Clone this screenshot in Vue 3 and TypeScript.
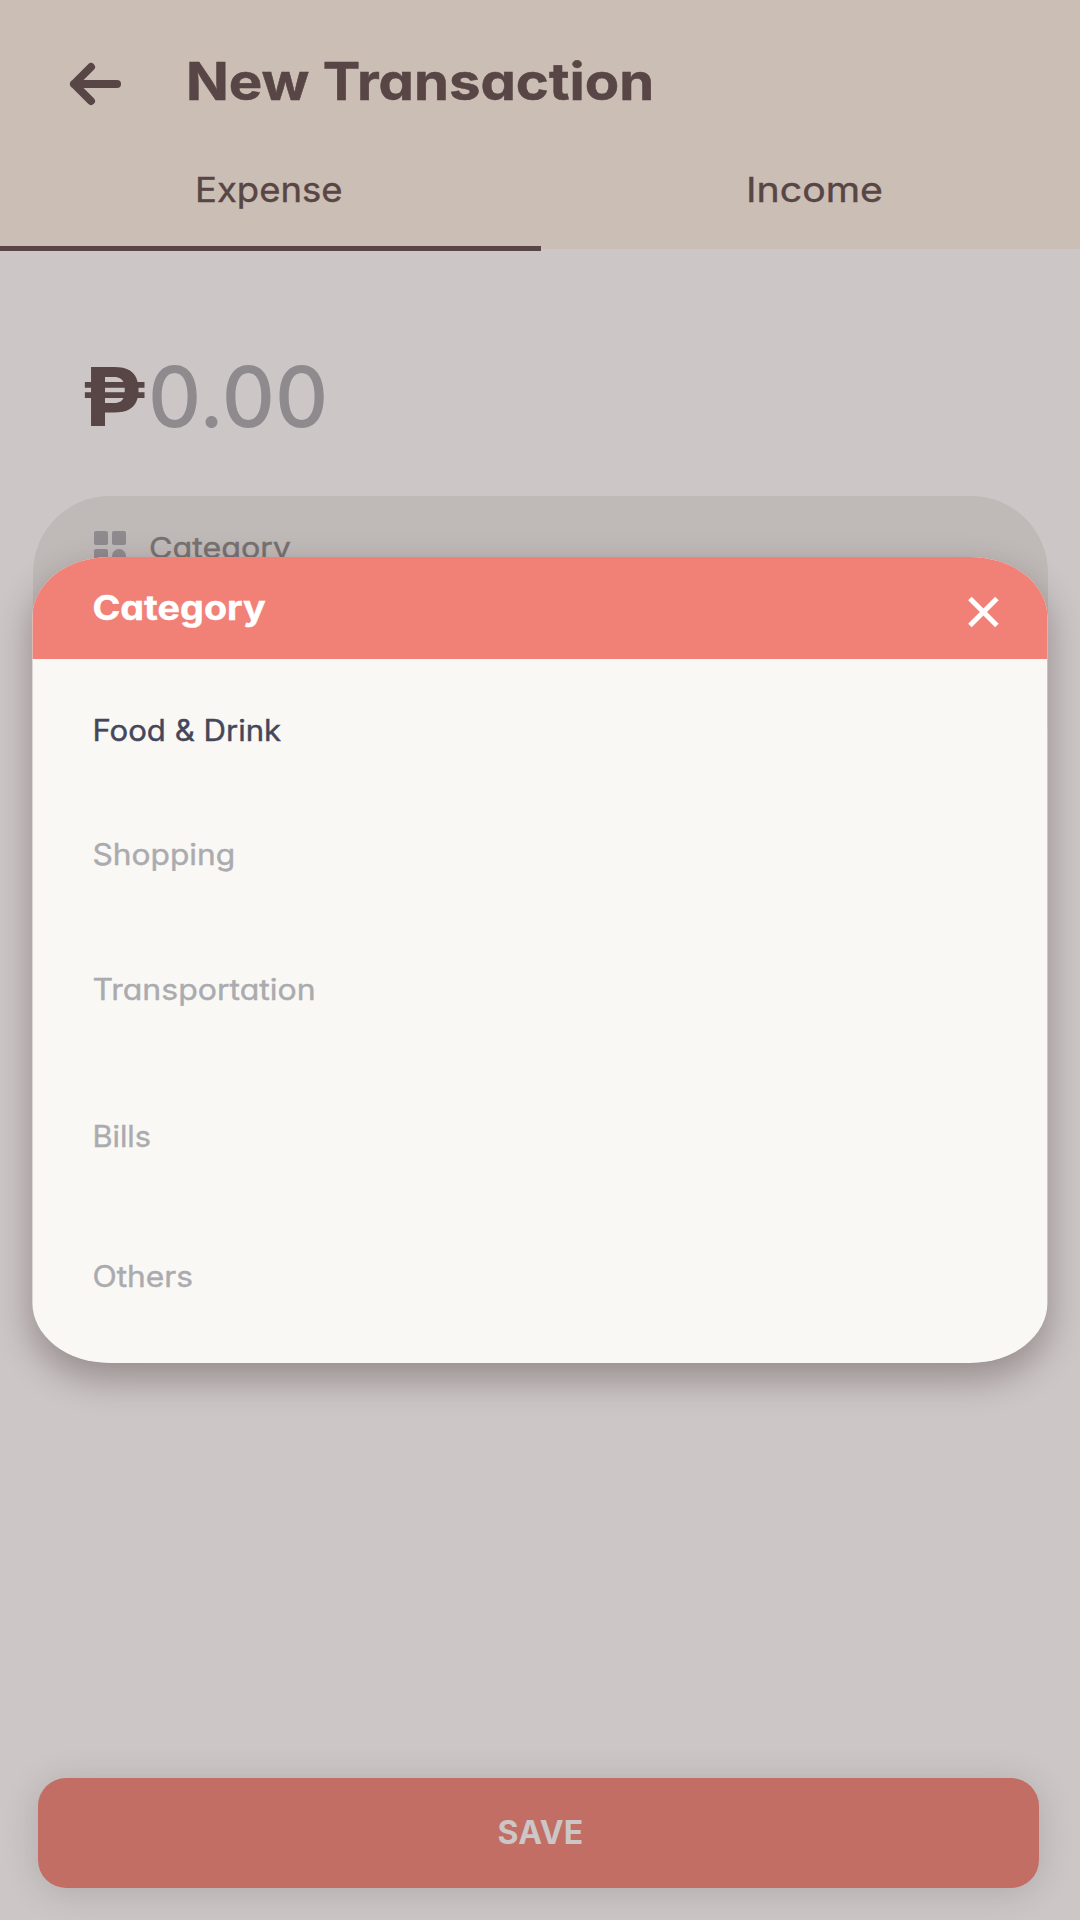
<script setup lang="ts">
interface Option {
  label: string
  cls: string
  active?: boolean
}

const options: Option[] = [
  { label: 'Food & Drink', cls: 'food', active: true },
  { label: 'Shopping', cls: 'shopping' },
  { label: 'Transportation', cls: 'transport' },
  { label: 'Bills', cls: 'bills' },
  { label: 'Others', cls: 'others' },
]
</script>

<template>
  <div class="screen">
    <header class="top">
      <div class="bar">
        <svg class="back" width="54" height="44" viewBox="0 0 54 44"><path d="M48 22H5M22 5L5 22L22 39" /></svg>
        <h1>New Transaction</h1>
      </div>
      <nav class="tabs">
        <div class="tab on"><span class="expense">Expense</span></div>
        <div class="tab"><span class="income">Income</span></div>
      </nav>
    </header>

    <div class="amount"><span class="peso">₱</span><span class="num">0.00</span></div>

    <section class="card">
      <svg width="34" height="34" viewBox="0 0 34 34">
        <rect x="1" y="1" width="14" height="14" rx="2" />
        <rect x="19" y="1" width="14" height="14" rx="2" />
        <rect x="1" y="19" width="14" height="14" rx="2" />
        <circle cx="26" cy="26" r="7" />
      </svg>
      <span class="field">Category</span>
    </section>

    <section class="modal">
      <div class="head">
        <h2>Category</h2>
        <svg width="32" height="32" viewBox="0 0 32 32"><path d="M2.5 2.5L29.5 29.5M29.5 2.5L2.5 29.5" /></svg>
      </div>
      <ul>
        <li v-for="o in options" :key="o.label" :class="[o.cls, { active: o.active }]">{{ o.label }}</li>
      </ul>
    </section>

    <button class="save">SAVE</button>
  </div>
</template>

<style>
body { margin: 0; }
</style>

<style scoped>
.screen {
  position: relative;
  width: 1080px;
  height: 1920px;
  overflow: hidden;
  display: flex;
  flex-direction: column;
  background: #ccc6c6;
  color: #584545;
  font-family: Inter, "Open Sans", sans-serif;
  font-weight: 400;
  font-feature-settings: "cv11";
  white-space: nowrap;
}
h1, h2, ul { margin: 0; padding: 0; }
h1, h2, li, .expense, .income, .field, .peso, .num { transform-origin: left; }
li, .expense, .income, .field { -webkit-text-stroke: 0.4px currentColor; }

.top { height: 249px; background: #cbbeb5; display: flex; flex-direction: column; flex: none; }
.bar { height: 142px; flex: none; display: flex; padding-top: 21.5px; box-sizing: border-box; }
.back { margin: 40.5px 0 0 69px; flex: none; }
.back path { fill: none; stroke: #584545; stroke-width: 8; stroke-linecap: round; stroke-linejoin: round; }
h1 { margin-left: 62.5px; font-size: 52px; line-height: 120px; font-weight: 700; transform: scaleX(1.081); -webkit-text-stroke: 0.5px currentColor; }

.tabs { height: 107px; flex: none; display: flex; align-items: flex-start; }
.tab { flex: 1; box-sizing: border-box; height: 107px; font-size: 34.5px; line-height: 96px; }
.tab.on { position: relative; flex: 0 0 541px; height: 109px; border-bottom: 5px solid #584545; }
.expense, .income { display: inline-block; }
.expense { margin-left: 195px; transform: scaleX(1.057); }
.income { margin-left: 204.5px; transform: scaleX(1.138); }

.amount { display: flex; flex: none; margin-top: 88px; padding-left: 81px; height: 120px; line-height: 120px; }
.peso { width: 67px; font-size: 81px; font-weight: 700; transform: scaleX(1.14); }
.num { font-size: 84px; font-weight: 500; color: #8f8a8e; transform: scaleX(0.982); }

.card {
  margin: 38.5px 32px 0 33px;
  height: 300px;
  border-radius: 77px;
  background: #bfb9b8;
  display: flex;
  flex: none;
  padding: 34px 0 0 60px;
  box-sizing: border-box;
  color: #777170;
  font-size: 29px;
  line-height: 35px;
}
.card svg { fill: #8f8a8e; margin-right: 21.5px; }
.field { height: 35px; transform: scaleX(1.11); }

.modal {
  position: absolute;
  left: 32px;
  top: 557px;
  width: 1015px;
  height: 806px;
  border-radius: 77px / 60px;
  overflow: hidden;
  background: #f9f8f4;
  box-shadow: 0 15px 36px rgba(30, 5, 5, 0.31);
  transform: translateX(0.4px);
}
.head { height: 102px; background: #f18177; display: flex; justify-content: space-between; padding: 0 48.5px 0 60px; color: #fff; box-sizing: border-box; }
.head svg { margin-top: 38.5px; }
.head path { stroke: #fff; stroke-width: 5; }
h2 { font-size: 34px; line-height: 102px; font-weight: 700; transform: scaleX(1.11); -webkit-text-stroke: 0.4px currentColor; }
ul { list-style: none; display: flex; flex-direction: column; align-items: flex-start; padding: 51px 0 0 60px; }
li { font-size: 29.5px; line-height: 40px; color: #ababaf; height: 40px; }
li.active { color: #44475a; }
.food { margin-bottom: 84px; transform: scaleX(1.055); }
.shopping { margin-bottom: 95px; transform: scaleX(1.075); }
.transport { margin-bottom: 107px; transform: scaleX(1.085); }
.bills { margin-bottom: 100px; transform: scaleX(1.04); }
.others { transform: scaleX(1.075); }

.save {
  position: absolute;
  left: 38px;
  top: 1778px;
  width: 1001px;
  height: 110px;
  border: 0;
  border-radius: 28px;
  background: #c26e65;
  color: #ccc6c6;
  font: 700 32px/110px Inter, sans-serif;
  letter-spacing: 0.2px;
  padding: 0 0 0 4px;
  box-shadow: 0 4px 36px rgba(0, 0, 0, 0.14);
}
</style>
